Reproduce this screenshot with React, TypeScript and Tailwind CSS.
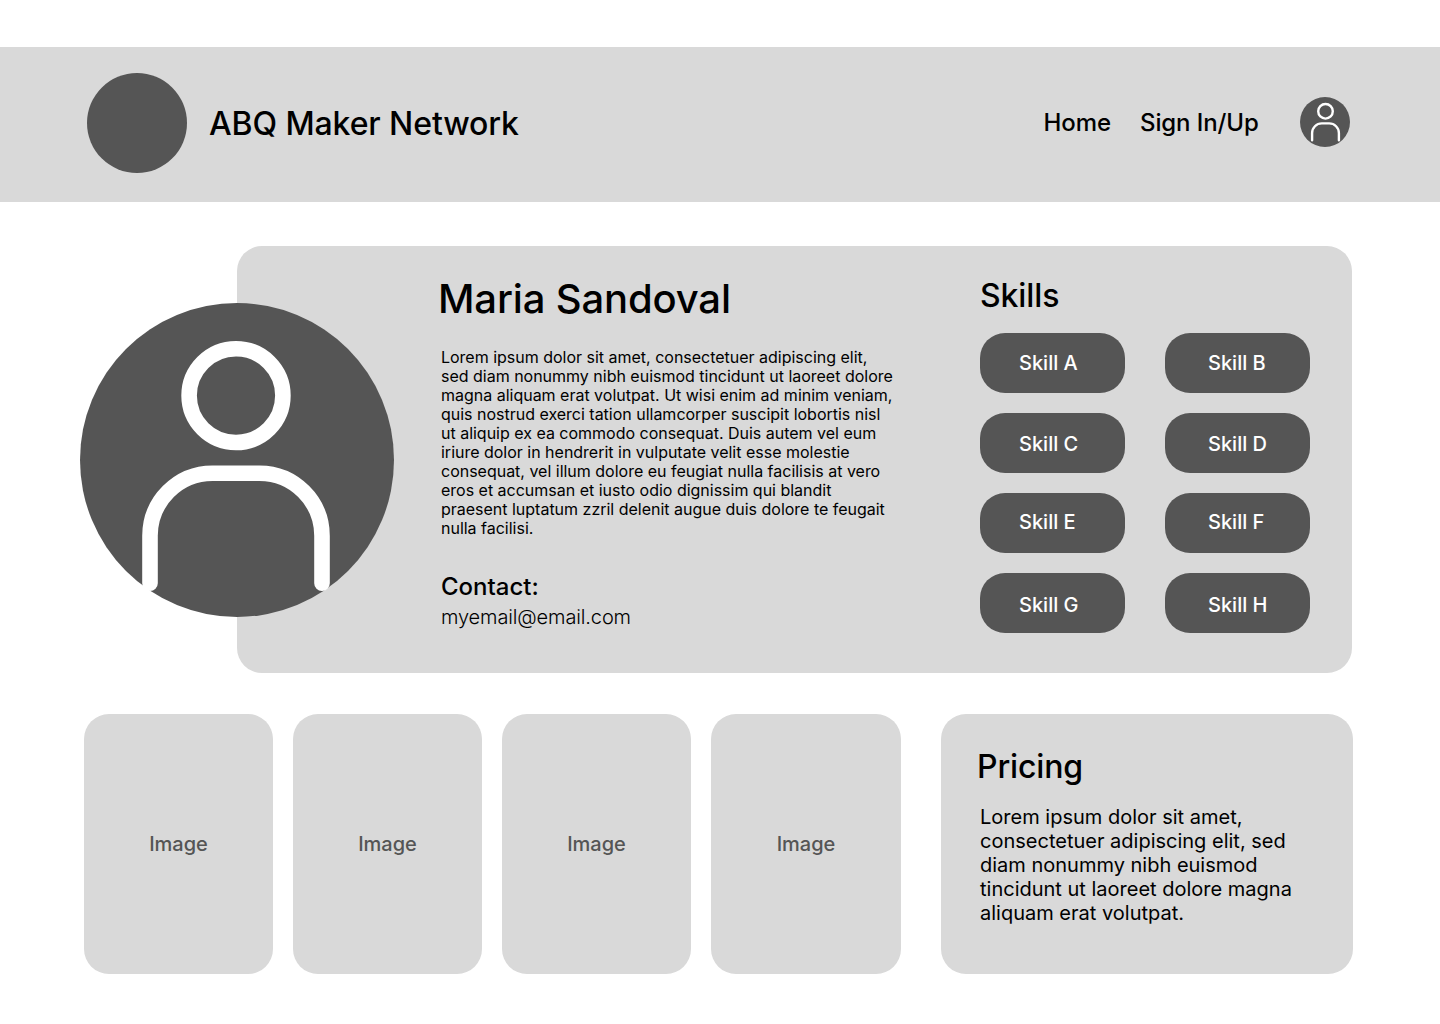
import React from "react";

const skills = [
  { name: "Skill A", pad: "pt-0" },
  { name: "Skill B", pad: "pt-0" },
  { name: "Skill C", pad: "pt-[2px]" },
  { name: "Skill D", pad: "pt-[2px]" },
  { name: "Skill E", pad: "pb-[2px]" },
  { name: "Skill F", pad: "pb-[2px]" },
  { name: "Skill G", pad: "pt-1" },
  { name: "Skill H", pad: "pt-1" },
];

const bio = [
  "Lorem ipsum dolor sit amet, consectetuer adipiscing elit,",
  "sed diam nonummy nibh euismod tincidunt ut laoreet dolore",
  "magna aliquam erat volutpat. Ut wisi enim ad minim veniam,",
  "quis nostrud exerci tation ullamcorper suscipit lobortis nisl",
  "ut aliquip ex ea commodo consequat. Duis autem vel eum",
  "iriure dolor in hendrerit in vulputate velit esse molestie",
  "consequat, vel illum dolore eu feugiat nulla facilisis at vero",
  "eros et accumsan et iusto odio dignissim qui blandit",
  "praesent luptatum zzril delenit augue duis dolore te feugait",
  "nulla facilisi.",
];

const pricing = [
  "Lorem ipsum dolor sit amet,",
  "consectetuer adipiscing elit, sed",
  "diam nonummy nibh euismod",
  "tincidunt ut laoreet dolore magna",
  "aliquam erat volutpat.",
];

function Lines({ lines }: { lines: string[] }) {
  return (
    <>
      {lines.map((line) => (
        <span key={line} className="block whitespace-nowrap">
          {line}
        </span>
      ))}
    </>
  );
}

function ProfileAvatar() {
  return (
    <svg viewBox="0 0 314 314" className="relative z-10 mt-[57px] size-[314px] shrink-0" fill="none" aria-hidden="true">
      <circle cx="157" cy="157" r="157" fill="#555" />
      <g stroke="#fff" strokeWidth="15.6" strokeLinecap="round">
        <circle cx="156" cy="92.6" r="46.9" />
        <path d="M70 280.2V232.8a62.5 62.5 0 0 1 62.5-62.5h47a62.5 62.5 0 0 1 62.5 62.5V280.2" />
      </g>
    </svg>
  );
}

function AccountIcon() {
  return (
    <svg viewBox="0 0 50 50" className="mt-[50px] size-[50px] shrink-0" fill="none" aria-hidden="true">
      <circle cx="25" cy="25" r="25" fill="#555" />
      <g stroke="#fff" strokeWidth="2.4" strokeLinecap="round">
        <circle cx="25.5" cy="14.3" r="7.3" />
        <path d="M12.1 43.3V36.1a9.7 9.7 0 0 1 9.7-9.7h7.4a9.7 9.7 0 0 1 9.7 9.7V43.3" />
      </g>
    </svg>
  );
}

export default function App() {
  return (
    <div className="h-[1024px] w-[1440px] overflow-hidden bg-white pt-[47px] font-['Inter',sans-serif] font-medium text-black">
      <header className="flex h-[155px] bg-[#d9d9d9] pl-[87px] pr-[90px]">
        <div className="mt-[26px] size-[100px] shrink-0 rounded-full bg-[#555]" />
        <h1 className="ml-[22px] mt-[57px] text-[32px] leading-[39px] tracking-[-0.1px] whitespace-nowrap">ABQ Maker Network</h1>
        <nav className="ml-auto flex text-2xl leading-[30px] tracking-[-0.1px] whitespace-nowrap">
          <a className="mt-[61px] ml-[-0.5px] w-[96.5px]">Home</a>
          <a className="mt-[61px] w-[160px]">Sign In/Up</a>
          <AccountIcon />
        </nav>
      </header>

      <section className="ml-[80px] mt-[44px] flex h-[427px] w-[1272px]">
        <ProfileAvatar />
        <div className="ml-[-157px] flex flex-1 rounded-[25px] bg-[#d9d9d9]">
          <div className="ml-[201px] w-[542px] pt-7">
            <h2 className="text-[40px] leading-[49px] tracking-[-0.15px]">Maria Sandoval</h2>
            <p className="ml-[3px] mt-[25px] text-base leading-[19px] font-normal tracking-[-0.01px]">
              <Lines lines={bio} />
            </p>
            <h3 className="ml-[3px] mt-[34px] text-2xl leading-[29px]">Contact:</h3>
            <p className="ml-[3px] mt-[4px] text-xl leading-6 font-light tracking-[-0.13px]">myemail@email.com</p>
          </div>
          <div className="pt-[30px]">
            <h2 className="text-[32px] leading-[39px] tracking-[-0.1px]">Skills</h2>
            <ul className="mt-[18px] grid grid-cols-[145px_145px] gap-x-10 gap-y-5 text-xl leading-6 text-white">
              {skills.map((skill, i) => (
                <li
                  key={skill.name}
                  className={`flex h-[60px] items-center rounded-[25px] bg-[#555] ${i % 2 ? "pl-[43px]" : "pl-[39px]"} ${skill.pad}`}
                >
                  {skill.name}
                </li>
              ))}
            </ul>
          </div>
        </div>
      </section>

      <section className="ml-[84px] mt-[41px] flex h-[260px] w-[1269px] justify-between">
        <div className="grid w-[817px] grid-cols-[189px_189px_189px_190px] gap-5">
          {[0, 1, 2, 3].map((n) => (
            <div
              key={n}
              className="flex items-center justify-center rounded-[25px] bg-[#d9d9d9] text-xl leading-6 text-[#555]"
            >
              Image
            </div>
          ))}
        </div>
        <div className="w-[412px] rounded-[25px] bg-[#d9d9d9] pl-9 pt-[33px]">
          <h2 className="text-[32px] leading-[39px] tracking-[-0.15px]">Pricing</h2>
          <p className="ml-[3px] mt-[19px] text-xl leading-6 font-normal">
            <Lines lines={pricing} />
          </p>
        </div>
      </section>
    </div>
  );
}
